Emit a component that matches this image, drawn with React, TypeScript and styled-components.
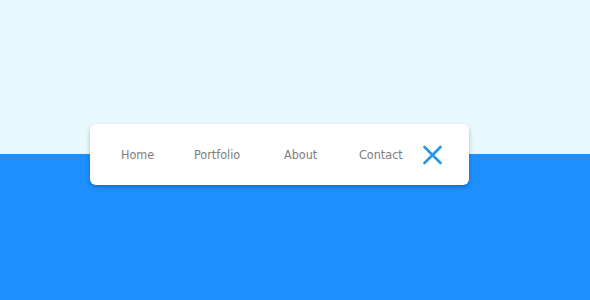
import React from "react";
import styled, {createGlobalStyle} from "styled-components";

const GlobalStyle = createGlobalStyle`
    html, body {
        margin: 0;
        padding: 0;
    }
    body {
        font-family: "DejaVu Sans Condensed", "DejaVu Sans", sans-serif;
    }
`;

const Page = styled.div`
    width: 590px;
    height: 300px;
    display: grid;
    grid-template-rows: 154px 1fr;
    position: relative;
`;

const Sky = styled.div`
    background: #e8f9fd;
`;

const Sea = styled.div`
    background: #1e8ffe;
`;

const Holder = styled.div`
    position: absolute;
    top: 124px;
    left: 90px;
`;

const Menu = styled.nav`
    width: 379px;
    height: 61px;
    box-sizing: border-box;
    background: #ffffff;
    border-radius: 6px;
    box-shadow: 0 2px 4px rgba(0, 0, 0, 0.25);
    display: flex;
    align-items: center;
    padding: 0 27px 0 31px;
`;

const Links = styled.ul`
    list-style: none;
    margin: 0;
    padding: 0;
    display: flex;
    align-items: center;
    flex: 1;
`;

const Link = styled.li<{w: number}>`
    width: ${({w}) => w}px;
    font-size: 12.5px;
    color: #7d7d7d;
    cursor: pointer;
`;

const Close = styled.button`
    border: none;
    background: none;
    padding: 0;
    width: 20px;
    height: 20px;
    display: flex;
    align-items: center;
    justify-content: center;
    cursor: pointer;
`;

const App = () => (
    <>
        <GlobalStyle/>
        <Page>
            <Sky/>
            <Sea/>
            <Holder>
                <Menu>
                    <Links>
                        <Link w={73}>Home</Link>
                        <Link w={90}>Portfolio</Link>
                        <Link w={75}>About</Link>
                        <Link w={62}>Contact</Link>
                    </Links>
                    <Close aria-label="close">
                        <svg width="20" height="20" viewBox="0 0 20 20">
                            <path d="M2.5 2 L18.5 18 M18.5 2 L2.5 18" stroke="#2196f3" strokeWidth="2.6" strokeLinecap="round"/>
                        </svg>
                    </Close>
                </Menu>
            </Holder>
        </Page>
    </>
);

export default App;
